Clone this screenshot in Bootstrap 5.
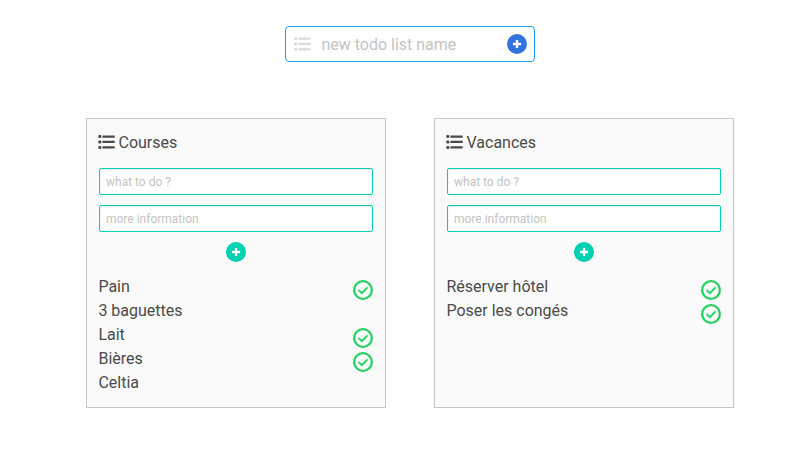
<!DOCTYPE html>
<html lang="fr">
<head>
<meta charset="utf-8">
<meta name="viewport" content="width=device-width, initial-scale=1">
<title>Todo lists</title>
<link href="https://cdn.jsdelivr.net/npm/bootstrap@5.3.0/dist/css/bootstrap.min.css" rel="stylesheet">
<style>
body{font-family:Roboto,sans-serif;font-size:16px;line-height:24px;color:#4a4a4a;background:#fff}
.page{padding:26px 0 0 86px;width:734px}
.new-list{width:250px;height:36px;margin-left:199px;border:1px solid #209cee;border-radius:4px;padding:0 7px 0 8px}
.new-list input{font-size:16px;line-height:24px;width:170px;margin:2px 0 0 10.4px}
input.form-control::placeholder{color:#c3c3c3;opacity:1}
.icon-list{width:17px;height:16px;flex:none}
.pale{color:#dbdbdb}
.lists{margin-top:56px;gap:48px}
.todo-box{width:300px;height:290px;background:#fafafa;border:1px solid #c6c6c6;padding:12px 12px 0}
.todo-box h2{font-size:16px;line-height:24px;font-weight:400;margin:0 0 13px -1px;gap:3.5px}
.todo-box h2 .icon-list{margin-top:-2px}
.todo-box .form-control{height:27px;font-size:12px;line-height:18px;padding:0 6px;border:1px solid #00d1b2;border-radius:2px;box-shadow:inset 0 1px 2px rgba(10,10,10,.1);margin-bottom:10px}
.add-btn{width:20px;height:20px;flex:none;background:#00d1b2;color:#fff}
.add-btn.blue{background:#3273dc}
.add-btn svg{width:10px;height:10px}
.todo-items{margin-top:13px}
.todo-items li{height:24px;margin-left:-.6px}
.done-btn{width:20px;height:20px;margin-top:5px;background:none;border:0;color:#23d160}
.done-btn svg{width:20px;height:20px}
</style>
</head>
<body>
<svg class="d-none">
<symbol id="list" viewBox="0 0 17 16"><g fill="currentColor"><rect x=".3" y="1.1" width="3" height="3" rx="1"/><rect x=".3" y="6.5" width="3" height="3" rx="1"/><rect x=".3" y="11.9" width="3" height="3" rx="1"/><rect x="4.4" y="1.5" width="12.3" height="2.3" rx=".3"/><rect x="4.4" y="6.8" width="12.3" height="2.3" rx=".3"/><rect x="4.4" y="12.2" width="12.3" height="2.3" rx=".3"/></g></symbol>
<symbol id="plus" viewBox="0 0 10 10"><path d="M5 .9v8.2M.9 5h8.2" stroke="currentColor" stroke-width="2.4"/></symbol>
<symbol id="check" viewBox="0 0 20 20"><circle cx="10" cy="10" r="8.85" fill="#fff" stroke="currentColor" stroke-width="2.3"/><path d="M5.5 9.9l3.3 3.2 5.8-5.8" fill="none" stroke="currentColor" stroke-width="1.9"/></symbol>
</svg>
<main class="page">
<form class="new-list d-flex align-items-center">
<svg class="icon-list pale"><use href="#list"/></svg>
<input class="form-control border-0 p-0 shadow-none" placeholder="new todo list name">
<button type="button" class="add-btn blue btn p-0 border-0 rounded-circle d-flex align-items-center justify-content-center ms-auto"><svg><use href="#plus"/></svg></button>
</form>
<div class="lists d-flex">
<section class="todo-box">
<h2 class="d-flex align-items-center"><svg class="icon-list"><use href="#list"/></svg>Courses</h2>
<input class="form-control" placeholder="what to do ?">
<input class="form-control" placeholder="more information">
<button type="button" class="add-btn btn p-0 border-0 rounded-circle d-flex align-items-center justify-content-center mx-auto"><svg><use href="#plus"/></svg></button>
<ul class="todo-items list-unstyled mb-0">
<li class="d-flex justify-content-between">Pain<button type="button" class="done-btn btn p-0 rounded-circle d-flex"><svg><use href="#check"/></svg></button></li>
<li>3 baguettes</li>
<li class="d-flex justify-content-between">Lait<button type="button" class="done-btn btn p-0 rounded-circle d-flex"><svg><use href="#check"/></svg></button></li>
<li class="d-flex justify-content-between">Bières<button type="button" class="done-btn btn p-0 rounded-circle d-flex"><svg><use href="#check"/></svg></button></li>
<li>Celtia</li>
</ul>
</section>
<section class="todo-box">
<h2 class="d-flex align-items-center"><svg class="icon-list"><use href="#list"/></svg>Vacances</h2>
<input class="form-control" placeholder="what to do ?">
<input class="form-control" placeholder="more information">
<button type="button" class="add-btn btn p-0 border-0 rounded-circle d-flex align-items-center justify-content-center mx-auto"><svg><use href="#plus"/></svg></button>
<ul class="todo-items list-unstyled mb-0">
<li class="d-flex justify-content-between">Réserver hôtel<button type="button" class="done-btn btn p-0 rounded-circle d-flex"><svg><use href="#check"/></svg></button></li>
<li class="d-flex justify-content-between">Poser les congés<button type="button" class="done-btn btn p-0 rounded-circle d-flex"><svg><use href="#check"/></svg></button></li>
</ul>
</section>
</div>
</main>
<script src="https://cdn.jsdelivr.net/npm/bootstrap@5.3.0/dist/js/bootstrap.bundle.min.js"></script>
</body>
</html>
